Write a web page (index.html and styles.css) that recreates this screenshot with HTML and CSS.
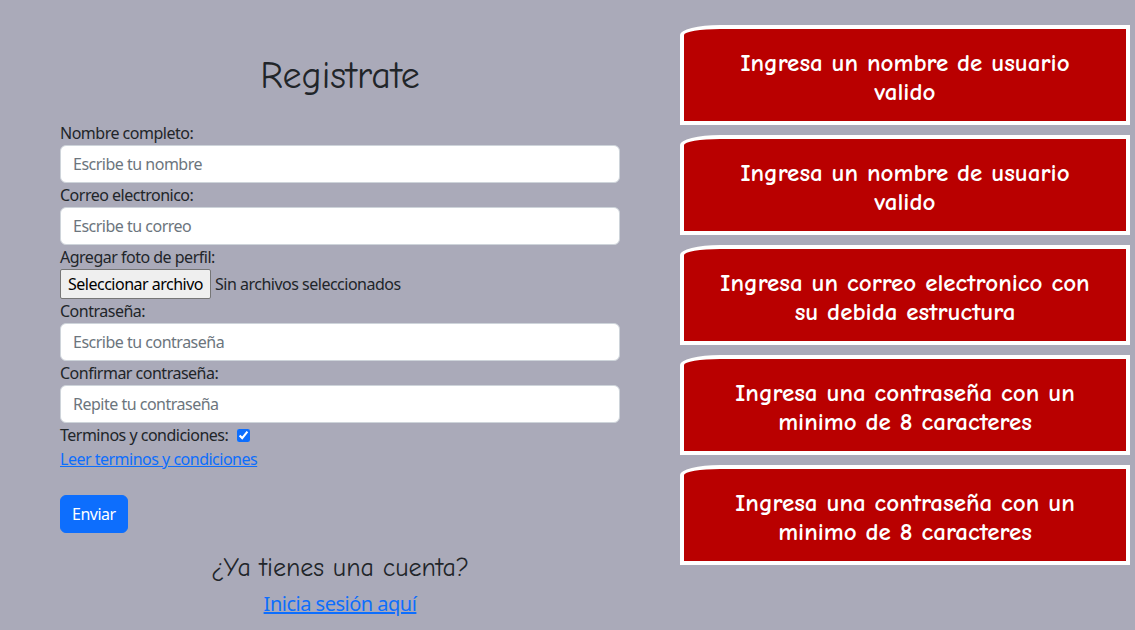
FILE: index.html
```html
<!DOCTYPE html>
<html lang="es">
<head>
<meta charset="utf-8">
<title>Registrate</title>
<link rel="stylesheet" href="styles.css">
</head>
<body>
<div class="page">
  <main class="form-col">
    <h2 class="title">Registrate</h2>
    <form class="form">
      <label class="lbl">Nombre completo:</label>
      <input class="field" type="text" placeholder="Escribe tu nombre">
      <label class="lbl">Correo electronico:</label>
      <input class="field" type="text" placeholder="Escribe tu correo">
      <label class="lbl">Agregar foto de perfil:</label>
      <div class="file-row">
        <button type="button" class="file-btn">Seleccionar archivo</button>
        <span class="file-text">Sin archivos seleccionados</span>
      </div>
      <label class="lbl">Contraseña:</label>
      <input class="field" type="password" placeholder="Escribe tu contraseña">
      <label class="lbl">Confirmar contraseña:</label>
      <input class="field" type="password" placeholder="Repite tu contraseña">
      <div class="terms">
        <span>Terminos y condiciones:</span>
        <input class="check" type="checkbox" checked>
      </div>
      <a class="link" href="#">Leer terminos y condiciones</a>
      <div class="submit-row">
        <button type="button" class="btn">Enviar</button>
      </div>
    </form>
    <h3 class="subtitle">¿Ya tienes una cuenta?</h3>
    <a class="login-link" href="#">Inicia sesión aquí</a>
  </main>
  <aside class="errors">
    <div class="err">Ingresa un nombre de usuario valido</div>
    <div class="err">Ingresa un nombre de usuario valido</div>
    <div class="err">Ingresa un correo electronico con su debida estructura</div>
    <div class="err">Ingresa una contraseña con un minimo de 8 caracteres</div>
    <div class="err">Ingresa una contraseña con un minimo de 8 caracteres</div>
  </aside>
</div>
</body>
</html>
```
FILE: styles.css
```css
* { box-sizing: border-box; }
html, body { margin: 0; padding: 0; }
body {
  background: #aaaab9;
  color: #212529;
  font-family: "Noto Sans", "Open Sans", sans-serif;
  font-size: 16px;
  line-height: 24px;
  letter-spacing: -0.5px;
  height: 630px;
  overflow: hidden;
}
.page {
  display: flex;
  align-items: flex-start;
}
.form-col {
  width: 560px;
  margin-left: 60px;
  margin-top: 52px;
  display: flex;
  flex-direction: column;
  align-items: center;
}
.title {
  margin: 0 0 21px;
  font-family: "Comic Sans MS", "Comic Neue", "Open Sans", sans-serif;
  font-weight: 400;
  font-size: 38px;
  line-height: 48px;
  letter-spacing: 0;
}
.form {
  width: 100%;
  display: flex;
  flex-direction: column;
  align-items: flex-start;
}
.lbl { display: block; }
.field {
  width: 100%;
  height: 38px;
  border: 1px solid #ced4da;
  border-radius: 6px;
  background: #fff;
  padding: 6px 12px;
  font: inherit;
  letter-spacing: inherit;
  color: #212529;
  outline: none;
}
.field::placeholder { color: #6c757d; }
.file-row {
  display: flex;
  align-items: center;
  height: 30px;
}
.file-btn {
  height: 30px;
  padding: 0 7px;
  background: #efefef;
  border: 1px solid #767676;
  border-radius: 2px;
  font: inherit;
  letter-spacing: inherit;
  color: #000;
  margin-right: 4px;
}
.file-text { color: #212529; }
.terms {
  display: flex;
  align-items: center;
  height: 24px;
}
.check {
  width: 13px;
  height: 13px;
  margin: 0 0 0 9px;
  accent-color: #0d6efd;
}
.link {
  color: #0d6efd;
  text-decoration: underline;
}
.submit-row { margin-top: 24px; }
.btn {
  height: 38px;
  padding: 0 11px;
  background: #0d6efd;
  color: #fff;
  border: 1px solid #0d6efd;
  border-radius: 6px;
  font: inherit;
  letter-spacing: inherit;
}
.subtitle {
  margin: 17px 0 0;
  font-family: "Comic Sans MS", "Comic Neue", "Open Sans", sans-serif;
  font-weight: 400;
  font-size: 26px;
  line-height: 36px;
  letter-spacing: 0;
}
.login-link {
  margin-top: 3px;
  font-size: 20px;
  line-height: 30px;
  color: #0d6efd;
  text-decoration: underline;
}
.errors {
  margin-left: 60px;
  margin-top: 25px;
  width: 450px;
  display: flex;
  flex-direction: column;
  gap: 10px;
}
.err {
  height: 100px;
  background: #b90000;
  border: 4px solid #fff;
  border-top-left-radius: 40px 10px;
  color: #fff;
  font-family: "Comic Sans MS", "Comic Neue", "Open Sans", sans-serif;
  font-weight: 700;
  font-size: 25px;
  line-height: 29px;
  letter-spacing: 0;
  text-align: center;
  padding: 19px 26px 0;
}
```
